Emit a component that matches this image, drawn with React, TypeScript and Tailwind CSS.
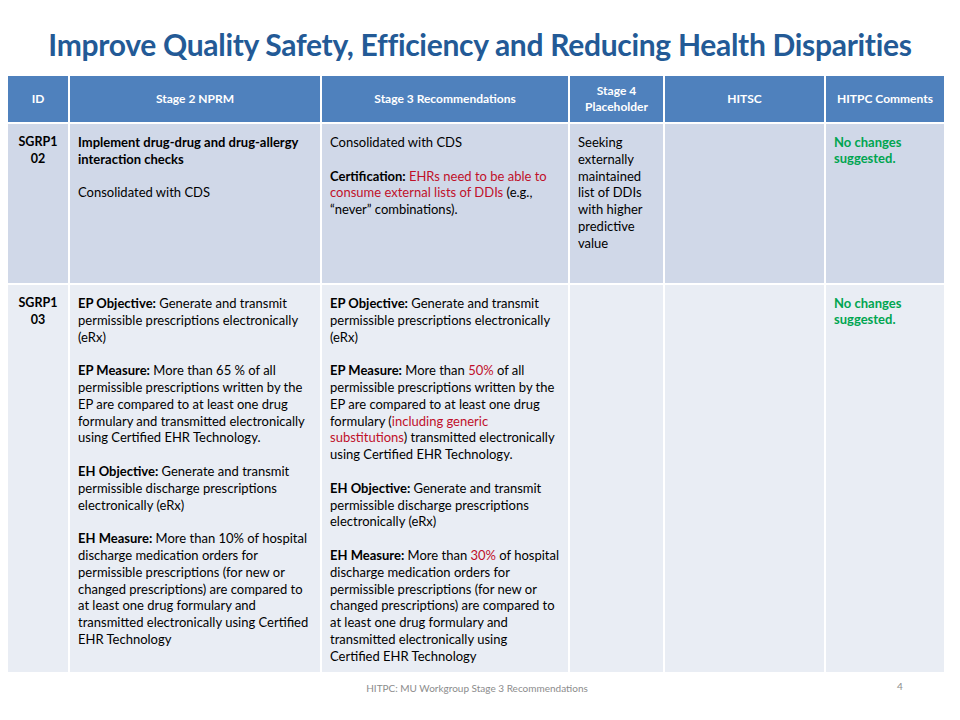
import React from 'react';

// Slide: MU Workgroup Stage 3 recommendations table
const font = { fontFamily: 'Lato, "Open Sans", sans-serif' };

type Line = React.ReactNode;

function Para({ lines }: { lines: Line[] }) {
  return (
    <p>
      {lines.map((l, i) => (
        <React.Fragment key={i}>
          {l}
          {i < lines.length - 1 && <br />}
        </React.Fragment>
      ))}
    </p>
  );
}

const B = ({ children }: { children: React.ReactNode }) => <span className="font-bold">{children}</span>;
const R = ({ children }: { children: React.ReactNode }) => <span className="text-[#c0102a]">{children}</span>;

function Cell({ children, className = '' }: { children?: React.ReactNode; className?: string }) {
  return (
    <div className={`pt-[10px] px-[8px] text-[13px] leading-[16.8px] text-black whitespace-nowrap overflow-hidden flex flex-col gap-[16.8px] ${className}`}>
      {children}
    </div>
  );
}

function Green() {
  return (
    <Cell className="text-[11.5px]">
      <p className="font-bold text-[#00a550] leading-[16px]">No changes<br />suggested.</p>
    </Cell>
  );
}

export default function App() {
  return (
    <div className="w-[960px] h-[720px] bg-white flex flex-col" style={font}>
      <h1 className="h-[76px] pt-[25px] text-center text-[30px] leading-[38px] font-bold text-[#235a96] tracking-[-0.3px]">
        Improve Quality Safety, Efficiency and Reducing Health Disparities
      </h1>

      <div className="ml-[8px] w-[936px] grid grid-cols-[60px_250px_246px_93px_159px_118px] grid-rows-[46px_159px_387px] gap-[2px] bg-white">
        {/* header */}
        {['ID', 'Stage 2 NPRM', 'Stage 3 Recommendations', null, 'HITSC', 'HITPC Comments'].map((h, i) => (
          <div key={i} className="bg-[#4f81bd] text-white font-bold text-[12px] leading-[16px] flex items-center justify-center text-center">
            {h ?? (
              <span>
                Stage 4<br />Placeholder
              </span>
            )}
          </div>
        ))}

        {/* row SGRP102 */}
        <div className="bg-[#d0d8e8] pt-[10px] text-center font-bold text-[12.5px] leading-[16.8px]">
          SGRP1<br />02
        </div>
        <Cell className="bg-[#d0d8e8]">
          <Para lines={[<B>Implement drug-drug and drug-allergy</B>, <B>interaction checks</B>]} />
          <Para lines={['Consolidated with CDS']} />
        </Cell>
        <Cell className="bg-[#d0d8e8]">
          <Para lines={['Consolidated with CDS']} />
          <Para
            lines={[
              <>
                <B>Certification: </B>
                <R>EHRs need to be able to</R>
              </>,
              <>
                <R>consume external lists of DDIs</R> (e.g.,
              </>,
              '“never” combinations).',
            ]}
          />
        </Cell>
        <Cell className="bg-[#d0d8e8]">
          <Para lines={['Seeking', 'externally', 'maintained', 'list of DDIs', 'with higher', 'predictive', 'value']} />
        </Cell>
        <div className="bg-[#d0d8e8]" />
        <div className="bg-[#d0d8e8]">
          <Green />
        </div>

        {/* row SGRP103 */}
        <div className="bg-[#e9edf4] pt-[10px] text-center font-bold text-[12.5px] leading-[16.8px]">
          SGRP1<br />03
        </div>
        <Cell className="bg-[#e9edf4]">
          <Para
            lines={[
              <>
                <B>EP Objective:</B> Generate and transmit
              </>,
              'permissible prescriptions electronically',
              '(eRx)',
            ]}
          />
          <Para
            lines={[
              <>
                <B>EP Measure:</B> More than 65 % of all
              </>,
              'permissible prescriptions written by the',
              'EP are compared to at least one drug',
              'formulary and transmitted electronically',
              'using Certified EHR Technology.',
            ]}
          />
          <Para
            lines={[
              <>
                <B>EH Objective:</B> Generate and transmit
              </>,
              'permissible discharge prescriptions',
              'electronically (eRx)',
            ]}
          />
          <Para
            lines={[
              <>
                <B>EH Measure:</B> More than 10% of hospital
              </>,
              'discharge medication orders for',
              'permissible prescriptions (for new or',
              'changed prescriptions) are compared to',
              'at least one drug formulary and',
              'transmitted electronically using Certified',
              'EHR Technology',
            ]}
          />
        </Cell>
        <Cell className="bg-[#e9edf4]">
          <Para
            lines={[
              <>
                <B>EP Objective:</B> Generate and transmit
              </>,
              'permissible prescriptions electronically',
              '(eRx)',
            ]}
          />
          <Para
            lines={[
              <>
                <B>EP Measure:</B> More than <R>50%</R> of all
              </>,
              'permissible prescriptions written by the',
              'EP are compared to at least one drug',
              <>
                formulary (<R>including generic</R>
              </>,
              <>
                <R>substitutions</R>) transmitted electronically
              </>,
              'using Certified EHR Technology.',
            ]}
          />
          <Para
            lines={[
              <>
                <B>EH Objective:</B> Generate and transmit
              </>,
              'permissible discharge prescriptions',
              'electronically (eRx)',
            ]}
          />
          <Para
            lines={[
              <>
                <B>EH Measure:</B> More than <R>30%</R> of hospital
              </>,
              'discharge medication orders for',
              'permissible prescriptions (for new or',
              'changed prescriptions) are compared to',
              'at least one drug formulary and',
              'transmitted electronically using',
              'Certified EHR Technology',
            ]}
          />
        </Cell>
        <div className="bg-[#e9edf4]" />
        <div className="bg-[#e9edf4]" />
        <div className="bg-[#e9edf4]">
          <Green />
        </div>
      </div>

      <div className="relative h-[30px] text-[10px] text-[#8c8c8c]">
        <span className="absolute left-0 right-0 top-[9px] text-center pr-[6px]">HITPC: MU Workgroup Stage 3 Recommendations</span>
        <span className="absolute left-[897px] top-[7px]">4</span>
      </div>
    </div>
  );
}
